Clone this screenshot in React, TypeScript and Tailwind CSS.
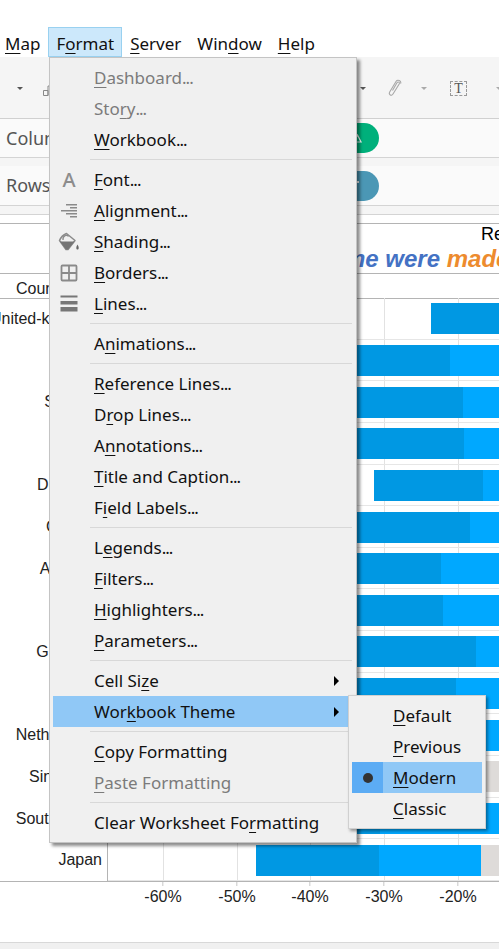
import type { ReactNode } from 'react';

const SANS = 'font-["Liberation_Sans",Arial,sans-serif]';

type MenuEntry =
  | { sep: true }
  | {
      label: string;
      // index of the mnemonic letter, -1 when there is none
      key: number;
      disabled?: boolean;
      arrow?: boolean;
      active?: boolean;
      icon?: ReactNode;
    };

const menuItems: MenuEntry[] = [
  { label: 'Dashboard...', key: 0, disabled: true },
  { label: 'Story...', key: 3, disabled: true },
  { label: 'Workbook...', key: 0 },
  { sep: true },
  { label: 'Font...', key: 0, icon: <span className="text-[20px] font-medium leading-none text-[#8c8c8c]">A</span> },
  { label: 'Alignment...', key: 0, icon: <AlignIcon /> },
  { label: 'Shading...', key: 0, icon: <BucketIcon /> },
  { label: 'Borders...', key: 0, icon: <BordersIcon /> },
  { label: 'Lines...', key: 0, icon: <LinesIcon /> },
  { sep: true },
  { label: 'Animations...', key: 1 },
  { sep: true },
  { label: 'Reference Lines...', key: 0 },
  { label: 'Drop Lines...', key: 1 },
  { label: 'Annotations...', key: 1 },
  { label: 'Title and Caption...', key: 0 },
  { label: 'Field Labels...', key: 1 },
  { sep: true },
  { label: 'Legends...', key: 1 },
  { label: 'Filters...', key: 0 },
  { label: 'Highlighters...', key: 0 },
  { label: 'Parameters...', key: 0 },
  { sep: true },
  { label: 'Cell Size', key: 7, arrow: true },
  { label: 'Workbook Theme', key: 3, arrow: true, active: true },
  { sep: true },
  { label: 'Copy Formatting', key: 0 },
  { label: 'Paste Formatting', key: 0, disabled: true },
  { sep: true },
  { label: 'Clear Worksheet Formatting', key: 18 },
];

// x offsets inside the plot: start, end of dark, end of light, end of grey
const rows: { label: string; bar: [number, number, number, number] }[] = [
  { label: 'United-kingdom', bar: [323, 500, 500, 500] },
  { label: 'Spain', bar: [200, 342, 500, 500] },
  { label: 'Sweden', bar: [200, 355, 500, 500] },
  { label: 'France', bar: [200, 356, 500, 500] },
  { label: 'Denmark', bar: [266, 375, 500, 500] },
  { label: 'Canada', bar: [200, 362, 500, 500] },
  { label: 'Australia', bar: [200, 333, 500, 500] },
  { label: 'Ireland', bar: [200, 335, 500, 500] },
  { label: 'Germany', bar: [200, 368, 500, 500] },
  { label: 'Italy', bar: [200, 348, 500, 500] },
  { label: 'Netherlands', bar: [200, 270, 500, 500] },
  { label: 'Singapore', bar: [200, 270, 360, 500] },
  { label: 'South Africa', bar: [200, 272, 500, 500] },
  { label: 'Japan', bar: [148, 271, 373, 500] },
];

const ticks = [
  { label: '-60%', x: 163 },
  { label: '-50%', x: 237 },
  { label: '-40%', x: 310 },
  { label: '-30%', x: 384 },
  { label: '-20%', x: 458 },
];

function AlignIcon() {
  return (
    <svg width="18" height="16" viewBox="0 0 18 16" fill="#8a8a8a">
      <rect x="6" y="1" width="11" height="1.5" />
      <rect x="10" y="4" width="7" height="1.5" />
      <rect x="1" y="7" width="16" height="1.5" />
      <rect x="6" y="10" width="11" height="1.5" />
      <rect x="10" y="13" width="7" height="1.5" />
    </svg>
  );
}

function BucketIcon() {
  return (
    <svg width="22" height="19" viewBox="0 0 22 19">
      <path d="M1.5 8.5 C3 5 6 2.5 8.5 1.5 L17 8.5 L10 17.5 H8 Z" fill="#f0f0f0" stroke="#8a8a8a" strokeWidth="1.5" strokeLinejoin="round" />
      <path d="M2 9.5 H16.5 L10 17.5 H8 Z" fill="#757575" />
      <path d="M5 8 C4.5 3.5 9 2 10.5 4.5" fill="none" stroke="#8a8a8a" strokeWidth="1.3" />
      <path d="M19.5 12.5 C18 15 17.8 17.5 19.5 17.5 C21.2 17.5 21 15 19.5 12.5 Z" fill="#666" />
    </svg>
  );
}

function BordersIcon() {
  return (
    <svg width="18" height="18" viewBox="0 0 18 18" fill="none" stroke="#8a8a8a" strokeWidth="1.8">
      <rect x="1.5" y="1.5" width="15" height="15" rx="1" />
      <path d="M9 1.5 V16.5 M1.5 9 H16.5" />
    </svg>
  );
}

function LinesIcon() {
  return (
    <svg width="18" height="17" viewBox="0 0 18 17" fill="#777">
      <rect x="0.5" y="0.5" width="17" height="2" />
      <rect x="0.5" y="6" width="17" height="3.5" />
      <rect x="0.5" y="12" width="17" height="4.5" />
    </svg>
  );
}

function Mnemonic({ text, index }: { text: string; index: number }) {
  const dotted = text.endsWith('...');
  const body = dotted ? text.slice(0, -3) : text;
  return (
    <>
      {body.slice(0, index)}
      <span className="underline underline-offset-[3px] [text-decoration-skip-ink:none]">{body[index]}</span>
      {body.slice(index + 1)}
      {/* the dots run wider in this font than in the menu's own */}
      {dotted && <span className="tracking-[-1px]">...</span>}
    </>
  );
}

function Caret({ className = 'border-t-[#555]' }: { className?: string }) {
  return <span className={`block h-0 w-0 border-x-[3px] border-t-[3px] border-x-transparent ${className}`} />;
}

function MenuBar() {
  const items = [
    { label: 'Map', key: 0 },
    { label: 'Format', key: 1, open: true },
    { label: 'Server', key: 0 },
    { label: 'Window', key: 3 },
    { label: 'Help', key: 0 },
  ];
  return (
    <div className="mt-[27px] flex h-[30px] -ml-[3px]">
      {items.map((item) => (
        <div
          key={item.label}
          className={`flex items-center border px-[7px] pt-[3px] text-[17px] ${
            item.open ? 'border-[#99d1f0] bg-[#cce8fb]' : 'border-transparent'
          }`}
        >
          <Mnemonic text={item.label} index={item.key} />
        </div>
      ))}
    </div>
  );
}

function Toolbar() {
  return (
    <div className="flex h-[62px] items-center border-b border-[#d0d0d0] bg-[#f5f5f5] pt-[1px]">
      <div className="ml-[17px] mr-[20px]">
        <Caret />
      </div>
      <svg width="12" height="16" viewBox="0 0 12 16" fill="none" stroke="#888">
        <path d="M0.5 10.5 H5 V15.5 H0.5 Z M5 15.5 V6 H9 V15.5" />
      </svg>
      <div className="ml-auto flex items-center">
        <Caret />
        <svg className="ml-[22px]" width="14" height="18" viewBox="0 0 14 18" fill="none" stroke="#a8a8a8" strokeWidth="1.1">
          <path d="M4.5 11.5 L9 3.8 C10 2.2 12 3.2 11.2 5 L5 15 C3.5 17.5 0.3 15.6 1.7 13 L8 2.5 C9.5 0.2 13.6 1.6 12.6 4.6" />
        </svg>
        <div className="ml-[19px]">
          <Caret className="border-t-[#aaa]" />
        </div>
        <div className='ml-[23px] flex h-[15px] w-[17px] items-center justify-center border border-dashed border-[#999] font-["Liberation_Serif",serif] text-[14px] text-[#555]'>
          T
        </div>
        <div className="ml-[29px] -mr-[3px]">
          <Caret className="border-t-[#aaa]" />
        </div>
      </div>
    </div>
  );
}

function Shelf({ label, pill, height, glyph }: { label: string; pill: string; height: string; glyph: ReactNode }) {
  return (
    <div className={`flex items-center justify-between border-b border-[#d4d4d4] bg-[#fafafa] ${height}`}>
      <span className="pl-[6px] text-[18px] text-[#555]">{label}</span>
      <div className={`mr-[120px] flex h-[30px] w-[60px] items-center rounded-r-full pl-[35px] ${pill}`}>{glyph}</div>
    </div>
  );
}

function Chart() {
  return (
    <div className="relative -mt-px flex h-[584px] flex-col overflow-hidden border-b border-[#b4b4b4]">
      {/* gridlines sit behind the bars */}
      {ticks.map((t) => (
        <div key={t.x} className="absolute bottom-0 top-0 w-px bg-[#e2e2e2]" style={{ left: t.x }} />
      ))}
      {rows.map((row) => {
        const [start, dark, light, grey] = row.bar;
        return (
          <div key={row.label} className="relative flex flex-1 items-stretch">
            <div className="flex w-[108px] shrink-0 items-center justify-end border-r border-[#b4b4b4] pr-[5px]">
              <span className="whitespace-nowrap text-[16px] leading-none text-[#222]">{row.label}</span>
            </div>
            <div className="flex min-w-0 flex-1 items-center overflow-hidden border-b border-[#e6e6e6] pt-px" style={{ paddingLeft: start }}>
              <div className="flex h-[31px]">
                <div className="h-full shrink-0 bg-[#0098e3]" style={{ width: dark - start }} />
                <div className="h-full shrink-0 bg-[#00a8ff]" style={{ width: light - dark }} />
                <div className="h-full shrink-0 bg-[#dedbd9]" style={{ width: grey - light }} />
              </div>
            </div>
          </div>
        );
      })}
    </div>
  );
}

function Axis() {
  return (
    <div className="relative h-[61px] border-b border-[#d8d8d8]">
      {ticks.map((t) => (
        <div key={t.x} className="absolute top-0 flex -translate-x-1/2 flex-col items-center" style={{ left: t.x }}>
          <div className="h-[4px] w-px bg-[#c8c8c8]" />
          <span className="mt-[1px] text-[16px] leading-[20px] text-[#222]">{t.label}</span>
        </div>
      ))}
    </div>
  );
}

function FormatMenu() {
  return (
    <div className="absolute left-[49px] top-[57px] w-[308px] border border-[#c4c4c4] bg-[#f0f0f0] py-[4px] pl-[3px] pr-[8px] text-[17px] text-[#111] shadow-[3px_3px_3px_rgba(0,0,0,0.45)]">
      {menuItems.map((item, i) => {
        if ('sep' in item) {
          return (
            <div key={i} className="-mr-[4px] flex h-[9px] items-center pl-[37px]">
              <div className="h-px w-full bg-[#d8d8d8]" />
            </div>
          );
        }
        return (
          <div
            key={item.label}
            className={`flex h-[31px] items-center ${item.active ? 'bg-[#90c8f6]' : ''} ${item.disabled ? 'text-[#7b7b7b]' : ''}`}
          >
            <div className="flex w-[32px] shrink-0 items-center justify-center">{item.icon}</div>
            <span className="ml-[9px] whitespace-nowrap">
              <Mnemonic text={item.label} index={item.key} />
            </span>
            {item.arrow && (
              <span className="ml-auto mr-[9px] h-0 w-0 border-y-[5px] border-l-[5px] border-y-transparent border-l-black" />
            )}
          </div>
        );
      })}
    </div>
  );
}

function ThemeMenu() {
  const items = [
    { label: 'Default', active: false },
    { label: 'Previous', active: false },
    { label: 'Modern', active: true },
    { label: 'Classic', active: false },
  ];
  return (
    <div className="absolute left-[348px] top-[695px] w-[138px] border border-[#d0d0d0] bg-[#f0f0f0] px-[3px] py-[4px] text-[17px] text-[#111] shadow-[2px_2px_3px_rgba(0,0,0,0.4)]">
      {items.map((item) => (
        <div key={item.label} className={`flex h-[31px] items-center ${item.active ? 'bg-[#90c8f6]' : ''}`}>
          <div className={`flex h-full w-[31px] shrink-0 items-center justify-center ${item.active ? 'bg-[#5cacf4]' : ''}`}>
            {item.active && <span className="h-[10px] w-[10px] rounded-full bg-[#333]" />}
          </div>
          <span className="ml-[10px]">
            <Mnemonic text={item.label} index={0} />
          </span>
        </div>
      ))}
    </div>
  );
}

export default function App() {
  return (
    <div className='relative h-[949px] w-[499px] overflow-hidden bg-white font-["Noto_Sans",sans-serif] text-[#111]'>
      <MenuBar />
      <Toolbar />
      <Shelf
        label="Columns"
        pill="bg-[#00b07b]"
        height="h-[39px]"
        glyph={
          <svg className="-ml-[1px]" width="9" height="9" viewBox="0 0 9 9" fill="none" stroke="#fff" strokeWidth="1.2">
            <path d="M4.5 1 L8 8 H1 Z" />
          </svg>
        }
      />
      <div className="h-[8px] bg-[#f5f5f5]" />
      <Shelf
        label="Rows"
        pill="bg-[#4b97b5]"
        height="h-[40px]"
        glyph={<div className="-ml-[3px] -mt-[8px] h-[2px] w-[8px] bg-white" />}
      />
      <div className="h-[9px] border-b border-[#d4d4d4] bg-[#f5f5f5]" />
      <div className="h-[9px] border-b border-[#b4b4b4]" />
      <div className={`${SANS} h-[50px] overflow-hidden whitespace-nowrap border-b border-[#b4b4b4]`}>
        <div className="pl-[481px] text-[18px] leading-[20px] text-black">Report</div>
        <div className="pl-[344px] text-[24px] font-bold italic leading-[30px] text-[#4472c4]">
          me were <span className="text-[#ed8b2e]">made</span>
        </div>
      </div>
      <div className={`${SANS} h-[25px] border-b border-[#b4b4b4] pl-[16px] text-[16px] leading-[29px] text-[#222]`}>Country</div>
      <div className={SANS}>
        <Chart />
        <Axis />
      </div>
      <div className="h-[6px] bg-[#f0f0f0]" />
      <FormatMenu />
      <ThemeMenu />
    </div>
  );
}
